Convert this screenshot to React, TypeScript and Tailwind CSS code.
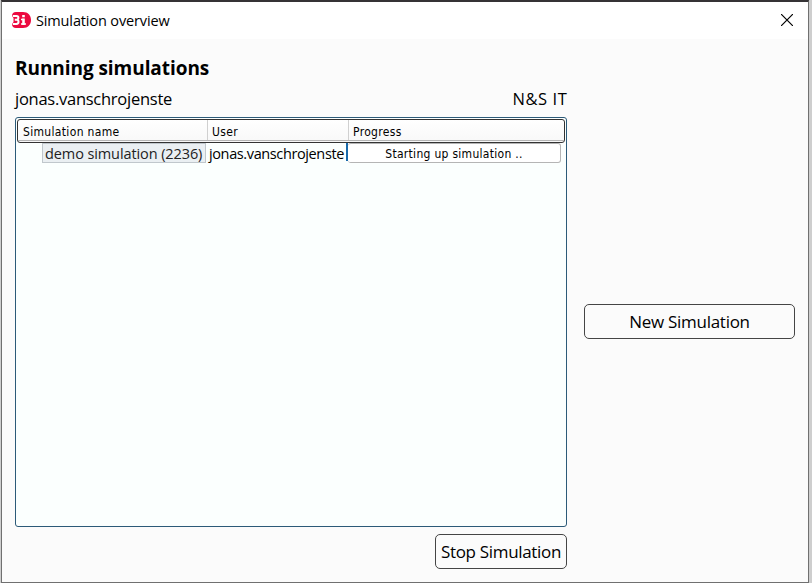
import React from "react";

function Logo() {
  return (
    <svg className="mb-[2px] h-[18px] w-5" viewBox="0 0 20 18">
      <path d="M5 1H12C17 1 20 4.5 20 9S17 17 12 17H5C2.500 17 1 15.500 1 13L2.500 11V7L1 5C1 2.500 2.500 1 5 1Z" fill="#ec0a40" />
      <path d="M1.800 5H5.500C8 5 8 8.700 5.500 8.700H3.800M5.500 8.700C8.200 8.700 8.200 13 5.500 13H1.800" fill="none" stroke="#fff" strokeWidth="2" />
      <path d="M12.500 7.500V14M12.500 4V6.200" fill="none" stroke="#fff" strokeWidth="2.600" />
      <path d="M10 8.500H12.500M10 13H15" fill="none" stroke="#fff" strokeWidth="1.600" />
    </svg>
  );
}

function TitleBar() {
  return (
    <header className="flex h-[37px] shrink-0 items-center bg-white pl-[9px] pr-[15px]">
      <Logo />
      <span className="ml-[5px] text-[14.5px] leading-5 tracking-[-0.14px]">Simulation overview</span>
      <svg className="mb-px ml-auto h-3 w-3" viewBox="0 0 12 12">
        <path d="M0 0L12 12M12 0L0 12" stroke="#000" strokeWidth="1.2" />
      </svg>
    </header>
  );
}

function HeaderRow() {
  return (
    <div className="mx-px mt-px flex h-[24px] rounded-[3px] border border-[#333] bg-linear-to-b from-white to-[#f8f8f8] font-['DejaVu_Sans_Condensed','DejaVu_Sans',sans-serif] text-[12px] leading-[24px] tracking-[0.33px]">
      <div className="mb-px flex w-full border-b border-[#b5b5b5]">
        <div className="w-[190px] border-r border-[#d0d0d0] pl-[5px]">Simulation name</div>
        <div className="w-[141px] border-r border-[#d0d0d0] pl-1">User</div>
        <div className="pl-1">Progress</div>
      </div>
    </div>
  );
}

function SimulationRow() {
  return (
    <div className="flex h-5 pl-[26px] text-[14.5px] leading-[20px]">
      <div className="w-[164px] border border-[#c0c7cc] bg-[#eaeff2] pl-[2px] leading-[20px] tracking-[-0.1px] whitespace-nowrap text-[#222]">demo simulation (2236)</div>
      <div className="w-[140px] pl-[3px] leading-[22px] tracking-[-0.38px] whitespace-nowrap">jonas.vanschrojenste</div>
      <div className="h-[18px] w-[2px] bg-[#1769aa]" />
      <div className="w-[213px] rounded-[3px] border border-l-0 border-[#b5b5b5] bg-white text-center font-['DejaVu_Sans_Condensed','DejaVu_Sans',sans-serif] text-[12px] leading-[20px] tracking-[0.29px] whitespace-nowrap">Starting up simulation ..</div>
    </div>
  );
}

export default function App() {
  return (
    <div className="h-[583px] w-[812px] overflow-hidden bg-[#cecece] pr-[3px] pl-px font-['Open_Sans','Noto_Sans',sans-serif] text-black">
      <div className="flex h-full flex-col border border-t-2 border-[#707070] border-t-[#353335] bg-[#fbfbfb]">
        <TitleBar />
        <main className="flex flex-1 pl-[13px]">
          <section className="flex w-[552px] flex-col">
            <h1 className="mt-[15px] h-[28px] text-[19px] leading-[28px] font-bold tracking-[-0.06px] whitespace-nowrap">Running simulations</h1>
            <div className="mt-[5px] flex h-[24px] justify-between text-[16.5px] leading-[24px]">
              <span className="tracking-[-0.26px]">jonas.vanschrojenste</span>
              <span className="-mr-[0.5px] tracking-[0.6px]">N&amp;S IT</span>
            </div>
            <div className="mt-[6px] h-[410px] rounded-[3px] border border-[#2c5a78] bg-[#fbfffe]">
              <HeaderRow />
              <SimulationRow />
            </div>
            <button className="mt-[7px] h-[35px] w-[132px] self-end rounded-[5px] border border-[#454545] text-[17px] tracking-[-0.32px] whitespace-nowrap">Stop Simulation</button>
          </section>
          <button className="mt-[265px] ml-[17px] h-[35px] w-[211px] rounded-[5px] border border-[#454545] text-[17px] tracking-[-0.28px]">New Simulation</button>
        </main>
      </div>
    </div>
  );
}
